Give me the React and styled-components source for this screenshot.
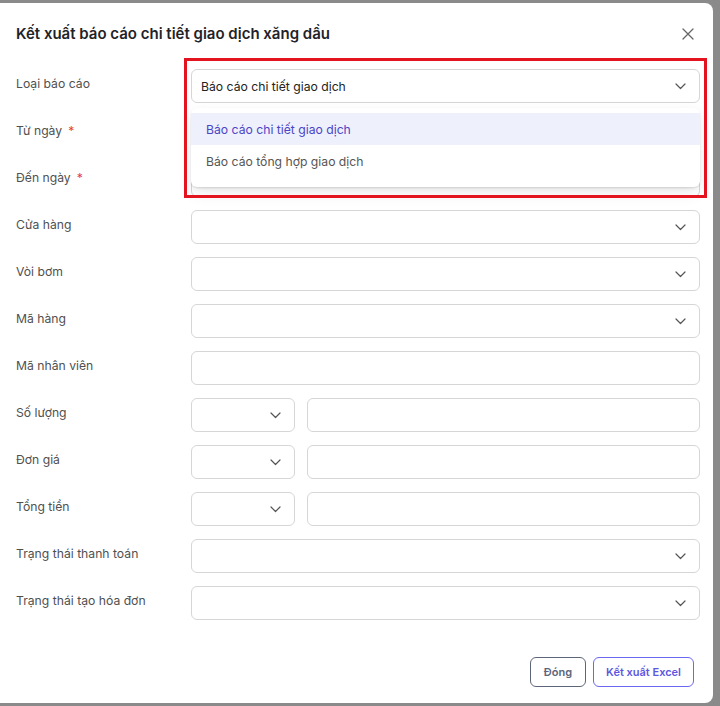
import React from "react";
import styled, { createGlobalStyle } from "styled-components";

const Global = createGlobalStyle`
  html, body { margin: 0; padding: 0; }
  body {
    background: #8a8a8a;
    font-family: Inter, "Noto Sans", "Liberation Sans", sans-serif;
    width: 720px;
    height: 706px;
    overflow: hidden;
  }
  * { box-sizing: border-box; }
`;

const Modal = styled.div`
  margin-top: 3px;
  width: 713px;
  height: 700px;
  background: #fff;
  border-radius: 0 8px 8px 0;
  display: flex;
  flex-direction: column;
`;

const Header = styled.div`
  display: flex;
  align-items: center;
  justify-content: space-between;
  padding: 21px 19px 0 16px;
  height: 41px;
`;

const Title = styled.h2`
  margin: 0;
  font-size: 15px;
  line-height: 20px;
  font-weight: 600;
  color: #1f2328;
`;

const CloseBtn = styled.button`
  border: 0;
  background: none;
  padding: 0;
  width: 12px;
  height: 12px;
  display: flex;
  color: #666;
  cursor: pointer;
`;

const Form = styled.div`
  display: flex;
  flex-direction: column;
  gap: 13px;
  padding: 25px 13px 0 16px;
`;

const Row = styled.div`
  display: grid;
  grid-template-columns: 175px 1fr;
  align-items: start;
`;

const Label = styled.div`
  font-size: 12.2px;
  line-height: 18px;
  padding-top: 6px;
  color: #505050;
  white-space: nowrap;
`;

const Req = styled.span`
  color: #e53935;
  margin-left: 6px;
`;

const Control = styled.div`
  position: relative;
  display: flex;
  gap: 12px;
`;

const Box = styled.div`
  position: relative;
  height: 34px;
  flex: ${(p) => (p.$w ? `0 0 ${p.$w}px` : "1 1 auto")};
  border: 1px solid #d6d6d6;
  border-radius: 6px;
  background: #fff;
  display: flex;
  align-items: center;
  padding: 0 34px 0 9px;
  font-size: 12.2px;
  color: #222;
`;

const Chevron = styled.svg`
  position: absolute;
  right: 13px;
  top: 50%;
  margin-top: -3px;
  width: 11px;
  height: 7px;
`;

const Menu = styled.div`
  position: absolute;
  left: 0;
  right: 0;
  top: calc(100% + 5px);
  background: #fff;
  border-radius: 6px;
  padding: 5px 0 10px;
  box-shadow: 0 3px 6px -4px rgba(0, 0, 0, 0.12), 0 6px 16px 0 rgba(0, 0, 0, 0.08),
    0 1px 2px rgba(0, 0, 0, 0.1);
  z-index: 2;
`;

const Option = styled.div`
  height: 32px;
  display: flex;
  align-items: center;
  padding: 0 15px;
  font-size: 12.2px;
  color: ${(p) => (p.$active ? "#4b44c6" : "#555")};
  background: ${(p) => (p.$active ? "#eef1fb" : "transparent")};
`;

const Highlight = styled.div`
  position: absolute;
  left: -7px;
  right: -7px;
  top: -11px;
  height: 140px;
  border: 3px solid #e3141f;
  z-index: 3;
  pointer-events: none;
`;

const Footer = styled.div`
  display: flex;
  justify-content: flex-end;
  gap: 7px;
  padding: 37px 19px 0 0;
`;

const Button = styled.button`
  height: 30px;
  padding: 0 ${(p) => (p.$primary ? 12 : 13)}px;
  border-radius: 6px;
  background: #fff;
  font-family: inherit;
  font-size: 11px;
  font-weight: 600;
  border: 1px solid ${(p) => (p.$primary ? "#6b67f0" : "#5d6679")};
  color: ${(p) => (p.$primary ? "#5d57e0" : "#5d6679")};
  cursor: pointer;
`;

const Arrow = () => (
  <Chevron viewBox="0 0 11 7" fill="none">
    <path d="M1 1l4.5 4.5L10 1" stroke="#555" strokeWidth="1.2" strokeLinecap="round" strokeLinejoin="round" />
  </Chevron>
);

const Select = ({ children, w }) => (
  <Box $w={w}>
    {children}
    <Arrow />
  </Box>
);

const Input = ({ w }) => <Box $w={w} />;

export default function App() {
  const fields = [
    { label: "Cửa hàng", type: "select" },
    { label: "Vòi bơm", type: "select" },
    { label: "Mã hàng", type: "select" },
    { label: "Mã nhân viên", type: "input" },
    { label: "Số lượng", type: "pair" },
    { label: "Đơn giá", type: "pair" },
    { label: "Tổng tiền", type: "pair" },
    { label: "Trạng thái thanh toán", type: "select" },
    { label: "Trạng thái tạo hóa đơn", type: "select" },
  ];
  return (
    <>
      <Global />
      <Modal>
        <Header>
          <Title>Kết xuất báo cáo chi tiết giao dịch xăng dầu</Title>
          <CloseBtn aria-label="close">
            <svg viewBox="0 0 12 12" width="12" height="12" fill="none">
              <path d="M1 1l10 10M11 1L1 11" stroke="#666" strokeWidth="1.3" strokeLinecap="round" />
            </svg>
          </CloseBtn>
        </Header>
        <Form>
          <Row>
            <Label>Loại báo cáo</Label>
            <Control>
              <Select>Báo cáo chi tiết giao dịch</Select>
              <Menu>
                <Option $active>Báo cáo chi tiết giao dịch</Option>
                <Option>Báo cáo tổng hợp giao dịch</Option>
              </Menu>
              <Highlight />
            </Control>
          </Row>
          <Row>
            <Label>
              Từ ngày<Req>*</Req>
            </Label>
            <Control>
              <Input />
            </Control>
          </Row>
          <Row>
            <Label>
              Đến ngày<Req>*</Req>
            </Label>
            <Control>
              <Input />
            </Control>
          </Row>
          {fields.map((f) => (
            <Row key={f.label}>
              <Label>{f.label}</Label>
              <Control>
                {f.type === "select" && <Select />}
                {f.type === "input" && <Input />}
                {f.type === "pair" && (
                  <>
                    <Select w={104} />
                    <Input />
                  </>
                )}
              </Control>
            </Row>
          ))}
        </Form>
        <Footer>
          <Button>Đóng</Button>
          <Button $primary>Kết xuất Excel</Button>
        </Footer>
      </Modal>
    </>
  );
}
